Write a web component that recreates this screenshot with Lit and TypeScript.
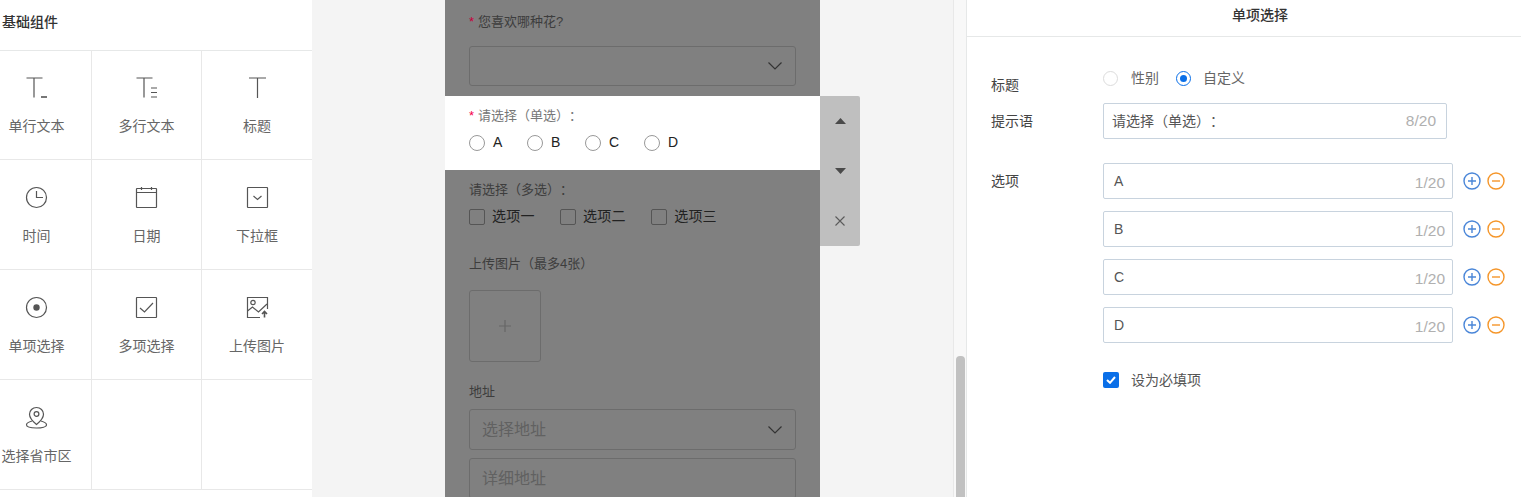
import { LitElement, html, css, svg } from "lit";
import { customElement } from "lit/decorators.js";

const glyphs: Record<string, any> = {
  single: svg`<path d="M0.5 1H16.5M8 1V20.5"/><path class="heavy" d="M15 20H21"/>`,
  multi: svg`<path d="M0.5 1H16.5M8 1V20.5M15 11H21M15 15.5H21M15 20H21"/>`,
  title: svg`<path d="M2 1H19M10.5 1V21"/>`,
  clock: svg`<circle cx="10.5" cy="10.5" r="10"/><path d="M10.5 4V10.5H17"/>`,
  date: svg`<rect x="0.5" y="1.5" width="20" height="19" rx="0.5"/><path d="M0.5 5.5H20.5M5.5 0V3M15.5 0V3"/>`,
  dropdown: svg`<rect x="0.5" y="0.5" width="20" height="20" rx="0.5"/><path d="M6.5 9L10.5 12.5L14.5 9"/>`,
  radio: svg`<circle cx="10.5" cy="10.5" r="10"/><circle class="fill" cx="10.5" cy="10.5" r="3.2"/>`,
  check: svg`<rect x="0.5" y="0.5" width="20" height="20" rx="0.5"/><path d="M4 11L8.5 15L17 6"/>`,
  upload: svg`<path d="M20.5 12V0.5H0.5V20.5H13"/><circle cx="6" cy="5.5" r="2.2"/><path d="M0.5 14L5.5 10L11.5 15L20 7"/><path class="heavy" d="M17.5 20.5V14.5M15 17L17.5 14.5L20 17"/>`,
  location: svg`<path d="M10.5 0.5C6.5 0.5 3.5 3.5 3.5 7.2C3.5 10.5 7.5 15 10.5 17.5C13.5 15 17.5 10.5 17.5 7.2C17.5 3.5 14.5 0.5 10.5 0.5Z"/><circle cx="10.5" cy="7" r="2.4"/><path d="M6 14C2.5 15 0.5 16.3 0.5 17.8C0.5 19.8 5 21 10.5 21S20.5 19.8 20.5 17.8C20.5 16.3 18.5 15 15 14"/>`,
};

const tools = [
  ["single", "单行文本"], ["multi", "多行文本"], ["title", "标题"],
  ["clock", "时间"], ["date", "日期"], ["dropdown", "下拉框"],
  ["radio", "单项选择"], ["check", "多项选择"], ["upload", "上传图片"],
  ["location", "选择省市区"], ["", ""], ["", ""],
];

const chevron = html`<svg class="chev" width="14" height="8" viewBox="0 0 14 8"><path d="M0.5 0.5L7 7L13.5 0.5"/></svg>`;

@customElement("app-root")
export class AppRoot extends LitElement {
  static styles = css`
    :host { display: block; width: 1521px; height: 497px; overflow: hidden; background: #f4f4f4;
      font-family: "Liberation Sans", "Noto Sans CJK SC", sans-serif; font-size: 14px; line-height: 20px; color: #555;
      text-spacing-trim: space-all; }
    .page { display: flex; height: 497px; }

    .left { width: 312px; flex: none; background: #fff; overflow: hidden; }
    .left-head { height: 50px; padding: 12px 0 0 2px; box-sizing: border-box; font-weight: 500; color: #333; line-height: 20px; }
    .grid { display: grid; grid-template-columns: repeat(3, 110px); grid-auto-rows: 110px; margin-left: -18px; width: 330px;
      box-shadow: inset 0 1px 0 #e6e8e8; }
    .cell { display: flex; flex-direction: column; align-items: center; padding-top: 27px; box-sizing: border-box;
      border-right: 1px solid #e8e8e8; border-bottom: 1px solid #e8e8e8; }
    .cell:nth-child(3n) { border-right: 0; }
    .cell span { margin-top: 18px; white-space: nowrap; color: #666; }
    .tool { width: 21px; height: 21px; fill: none; stroke: #555; stroke-width: 1.2; overflow: visible; }
    .tool .fill { fill: #555; stroke: none; }
    .tool .heavy { stroke-width: 1.6; }

    .center { width: 641px; flex: none; position: relative; padding-left: 133px; box-sizing: border-box; }
    .phone { width: 375px; height: 497px; background: #808080; overflow: hidden; color: #3d3d3d; font-size: 13px; }
    .sec { padding: 0 24px; }
    .sec1 { height: 96px; padding-top: 12px; box-sizing: border-box; }
    .sel { height: 74px; padding-top: 10px; box-sizing: border-box; background: #fff; color: #777; }
    .sec3 { padding-top: 10px; }
    .star { color: #c8003c; margin-right: 4px; }
    .sel .star { color: #f5004a; }
    .box { display: flex; align-items: center; justify-content: space-between; box-sizing: border-box; width: 327px;
      border: 1px solid #6c6c6c; border-radius: 3px; padding: 0 13px 0 12px; font-size: 16px; color: #616161; }
    .s40 { height: 40px; margin-top: 14px; }
    .s41 { height: 41px; margin-top: 8px; }
    .chev { fill: none; stroke: #333; stroke-width: 1.2; flex: none; }
    .choices { display: flex; margin-top: 7px; height: 20px; font-size: 14px; color: #222; }
    .radio-list { gap: 24.7px; }
    .check-list { gap: 25.5px; }
    .choice { display: flex; align-items: center; }
    .choice span { padding-bottom: 2px; }
    .check-list .choice span { letter-spacing: 0.2px; }
    .rd { width: 16px; height: 16px; box-sizing: border-box; border: 1px solid #999; border-radius: 50%; margin-right: 8px; background: #fff; }
    .cb { width: 16px; height: 16px; box-sizing: border-box; border: 1px solid #555; border-radius: 2px; margin-right: 7px; }
    .dark-label { margin-top: 27px; }
    .uploadbox { width: 72px; height: 72px; box-sizing: border-box; margin-top: 16px; border: 1px solid #6c6c6c; border-radius: 3px;
      display: flex; align-items: center; justify-content: center; }
    .uploadbox svg { stroke: #666; stroke-width: 1.2; }
    .addr-label { margin-top: 20px; line-height: 19px; }

    .toolbar { position: absolute; left: 508px; top: 96px; width: 40px; height: 150px; background: #bfbfbf; border-radius: 0 2px 2px 0;
      display: flex; flex-direction: column; }
    .tb { height: 50px; display: flex; align-items: center; justify-content: center; }
    .tb svg { fill: #4a4a4a; stroke: none; }
    .tb svg.x { fill: none; stroke: #5a5a5a; stroke-width: 1.1; }

    .scroll { width: 13px; flex: none; box-sizing: border-box; border-left: 1px solid #e8e8e8; position: relative; background: #f8f8f8; }
    .thumb { position: absolute; left: 2px; top: 356px; bottom: 0; width: 9px; background: #c1c1c1; border-radius: 4px 4px 0 0; }

    .right { flex: 1; background: #fff; border-left: 1px solid #e6e8e8; box-sizing: border-box; color: #444; }
    .right-head { height: 37px; box-sizing: border-box; border-bottom: 1px solid #e6e8e8; text-align: center; padding: 5px 0 0 32px; font-weight: 500; color: #333; }
    .form { padding: 31px 0 0 24px; }
    .row { display: flex; align-items: flex-start; }
    .lab { width: 112px; flex: none; }
    .r1 .lab { margin-top: 7px; }
    .radios { display: flex; align-items: center; height: 20px; color: #666; }
    .r-off, .r-on { width: 15px; height: 15px; box-sizing: border-box; border-radius: 50%; }
    .r-off { border: 1px solid #dcdcdc; margin-right: 13px; }
    .r-on { border: 1px solid #0a6fe8; margin-right: 12px; display: flex; align-items: center; justify-content: center; }
    .r-on::after { content: ""; width: 7px; height: 7px; border-radius: 50%; background: #0a6fe8; }
    .radios .t1 { margin-right: 17px; }
    .r2 { margin-top: 8px; align-items: center; }
    .input { display: flex; align-items: center; justify-content: space-between; box-sizing: border-box; height: 36px;
      border: 1px solid #c8d3de; border-radius: 2px; }
    .prompt { width: 344px; padding: 0 10px 0 8px; font-size: 14px; color: #555; }
    .count { color: #b0b0b0; font-size: 15.5px; }
    .r3 { margin-top: 24px; }
    .r3 .lab { margin-top: 8px; }
    .opts { display: flex; flex-direction: column; gap: 12px; }
    .opt { display: flex; align-items: center; }
    .opt .input { width: 350px; padding: 0 7px 0 10px; color: #555; }
    .opt .count { padding-top: 4px; }
    .pm { width: 18px; height: 18px; fill: none; stroke-width: 1.4; flex: none; }
    .plus { stroke: #4a86d8; margin-left: 10px; }
    .minus { stroke: #f5962a; margin-left: 6px; }
    .r4 { margin-top: 27px; padding-left: 112px; align-items: center; color: #555; }
    .tick { width: 16px; height: 16px; border-radius: 2px; background: #0a6fe8; margin-right: 12px; display: flex; align-items: center; justify-content: center; }
    .tick svg { fill: none; stroke: #fff; stroke-width: 2; }
  `;

  private tool(name: string, label: string) {
    return html`<div class="cell">
      ${name ? html`<svg class="tool" viewBox="0 0 21 21">${glyphs[name]}</svg><span>${label}</span>` : ""}
    </div>`;
  }

  private option(text: string) {
    return html`<div class="opt">
      <div class="input"><span>${text}</span><span class="count">1/20</span></div>
      <svg class="pm plus" viewBox="0 0 18 18"><circle cx="9" cy="9" r="8"/><path d="M5 9H13M9 5V13"/></svg>
      <svg class="pm minus" viewBox="0 0 18 18"><circle cx="9" cy="9" r="8"/><path d="M5 9H13"/></svg>
    </div>`;
  }

  render() {
    return html`<div class="page">
      <aside class="left">
        <div class="left-head">基础组件</div>
        <div class="grid">${tools.map(([n, l]) => this.tool(n, l))}</div>
      </aside>

      <main class="center">
        <div class="phone">
          <div class="sec sec1">
            <div><span class="star">*</span>您喜欢哪种花?</div>
            <div class="box s40"><span></span>${chevron}</div>
          </div>
          <div class="sec sel">
            <div><span class="star">*</span>请选择（单选）：</div>
            <div class="choices radio-list">
              ${["A", "B", "C", "D"].map((o) => html`<div class="choice"><i class="rd"></i><span>${o}</span></div>`)}
            </div>
          </div>
          <div class="sec sec3">
            <div>请选择（多选）：</div>
            <div class="choices check-list">
              ${["选项一", "选项二", "选项三"].map((o) => html`<div class="choice"><i class="cb"></i><span>${o}</span></div>`)}
            </div>
            <div class="dark-label">上传图片（最多4张）</div>
            <div class="uploadbox"><svg width="12" height="12" viewBox="0 0 12 12"><path d="M0 6H12M6 0V12"/></svg></div>
            <div class="addr-label">地址</div>
            <div class="box s41"><span>选择地址</span>${chevron}</div>
            <div class="box s41"><span>详细地址</span></div>
          </div>
        </div>
        <div class="toolbar">
          <div class="tb"><svg width="11" height="6" viewBox="0 0 11 6"><path d="M5.5 0L11 6H0Z"/></svg></div>
          <div class="tb"><svg width="11" height="6" viewBox="0 0 11 6"><path d="M0 0H11L5.5 6Z"/></svg></div>
          <div class="tb"><svg class="x" width="10" height="10" viewBox="0 0 10 10"><path d="M0.5 0.5L9.5 9.5M9.5 0.5L0.5 9.5"/></svg></div>
        </div>
      </main>

      <div class="scroll"><div class="thumb"></div></div>

      <section class="right">
        <div class="right-head">单项选择</div>
        <div class="form">
          <div class="row r1">
            <div class="lab">标题</div>
            <div class="radios"><i class="r-off"></i><span class="t1">性别</span><i class="r-on"></i><span>自定义</span></div>
          </div>
          <div class="row r2">
            <div class="lab">提示语</div>
            <div class="input prompt"><span>请选择（单选）：</span><span class="count">8/20</span></div>
          </div>
          <div class="row r3">
            <div class="lab">选项</div>
            <div class="opts">${["A", "B", "C", "D"].map((o) => this.option(o))}</div>
          </div>
          <div class="row r4">
            <div class="tick"><svg width="10" height="8" viewBox="0 0 10 8"><path d="M1 4L4 6.8L9 1"/></svg></div>
            <span>设为必填项</span>
          </div>
        </div>
      </section>
    </div>`;
  }
}
